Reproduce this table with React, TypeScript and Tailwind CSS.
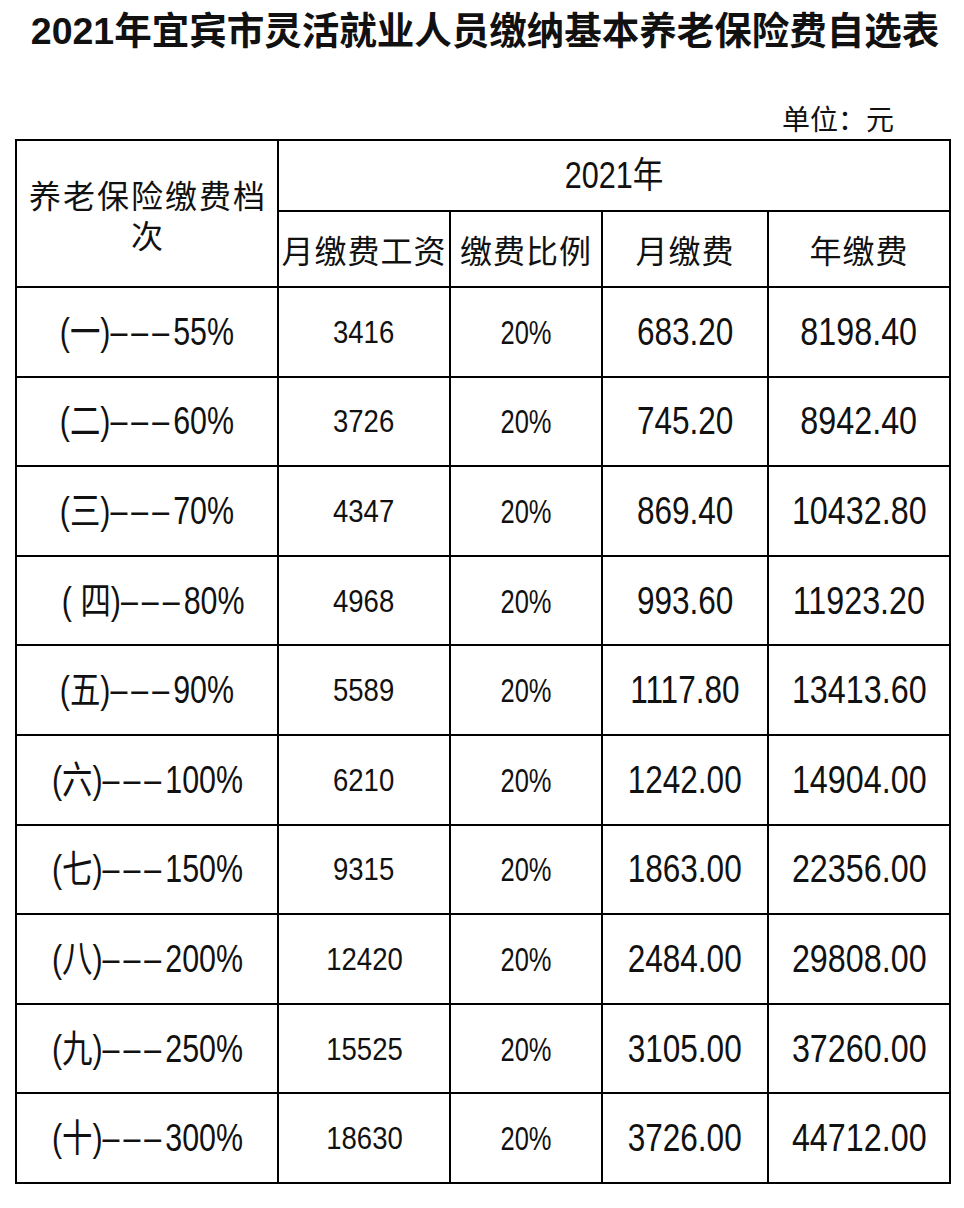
import React from "react";

const FONT = { fontFamily: '"Liberation Sans", "Noto Sans CJK SC", sans-serif' };
const CJK = { fontFamily: '"Noto Sans CJK SC", "Liberation Sans", sans-serif' };

type Row = { grade: string; pct: string; wage: string; month: string; year: string; shift?: boolean };

const rows: Row[] = [
  { grade: "(一)", pct: "55%", wage: "3416", month: "683.20", year: "8198.40" },
  { grade: "(二)", pct: "60%", wage: "3726", month: "745.20", year: "8942.40" },
  { grade: "(三)", pct: "70%", wage: "4347", month: "869.40", year: "10432.80" },
  { grade: "( 四)", pct: "80%", wage: "4968", month: "993.60", year: "11923.20", shift: true },
  { grade: "(五)", pct: "90%", wage: "5589", month: "1117.80", year: "13413.60" },
  { grade: "(六)", pct: "100%", wage: "6210", month: "1242.00", year: "14904.00" },
  { grade: "(七)", pct: "150%", wage: "9315", month: "1863.00", year: "22356.00" },
  { grade: "(八)", pct: "200%", wage: "12420", month: "2484.00", year: "29808.00" },
  { grade: "(九)", pct: "250%", wage: "15525", month: "3105.00", year: "37260.00" },
  { grade: "(十)", pct: "300%", wage: "18630", month: "3726.00", year: "44712.00" },
];

const cell = "flex items-center justify-center border-r-2 border-b-2 border-black overflow-hidden";

export default function App() {
  return (
    <div className="w-[964px] h-[1208px] bg-white text-[#111]" style={FONT}>
      <div className="h-[64px] flex items-center justify-center pl-[6px]">
        <h1 className="text-[37.5px] font-bold leading-none whitespace-nowrap">
          2021年宜宾市灵活就业人员缴纳基本养老保险费自选表
        </h1>
      </div>
      <div className="h-[75px] flex items-end justify-end pr-[70px] pb-[7px]">
        <span className="text-[28px] leading-[28px]" style={CJK}>
          单位：元
        </span>
      </div>
      <div className="ml-[15px] w-[936px] border-l-2 border-t-2 border-black grid grid-cols-[262px_172px_152px_166px_182px] grid-rows-[71px_76px]">
        <div className={`${cell} row-span-2 px-[10px]`}>
          <div className="text-center text-[32px] leading-[40px] tracking-[2px] pl-[2px]" style={CJK}>
            养老保险缴费档次
          </div>
        </div>
        <div className={`${cell} col-span-4`}>
          <span className="inline-block scale-x-[0.85] text-[36px] leading-none">2021年</span>
        </div>
        {["月缴费工资", "缴费比例", "月缴费", "年缴费"].map((t) => (
          <div key={t} className={cell}>
            <span className="text-[32px] leading-none tracking-[1px] whitespace-nowrap" style={CJK}>
              {t}
            </span>
          </div>
        ))}
        {rows.map((r) => (
          <React.Fragment key={r.grade}>
            <div className={`${cell} h-[89.6px]`}>
              <span
                className={`inline-block scale-x-[0.8] text-[38px] leading-none whitespace-pre ${r.shift ? "ml-[12px]" : ""}`}
              >
                {r.grade}
                <span className="tracking-[5px]">–––</span>
                {r.pct}
              </span>
            </div>
            <div className={`${cell} h-[89.6px]`}>
              <span className="inline-block scale-x-[0.86] text-[32px] leading-none">{r.wage}</span>
            </div>
            <div className={`${cell} h-[89.6px]`}>
              <span className="inline-block scale-x-[0.75] text-[34px] leading-none">20%</span>
            </div>
            <div className={`${cell} h-[89.6px]`}>
              <span className="inline-block scale-x-[0.83] text-[38px] leading-none">{r.month}</span>
            </div>
            <div className={`${cell} h-[89.6px]`}>
              <span className="inline-block scale-x-[0.85] text-[38px] leading-none">{r.year}</span>
            </div>
          </React.Fragment>
        ))}
      </div>
    </div>
  );
}
